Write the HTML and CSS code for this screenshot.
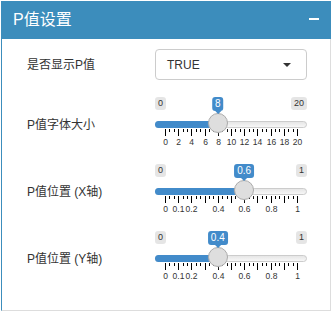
FILE: index.html
```html
<!DOCTYPE html>
<html lang="zh">
<head>
<meta charset="utf-8">
<title>P值设置</title>
<link rel="stylesheet" href="styles.css">
</head>
<body>
<div class="box">
  <div class="box-header">
    <h3 class="box-title">P值设置</h3>
    <span class="collapse-btn" aria-label="collapse"></span>
  </div>
  <div class="box-body">
    <div class="form-row select-row">
      <label class="control-label">是否显示P值</label>
      <div class="select">
        <span class="select-value">TRUE</span>
        <span class="caret"></span>
      </div>
    </div>
    <div class="form-row slider-row">
      <label class="control-label">P值字体大小</label>
      <div class="irs" data-min="0" data-max="20" data-value="8" data-labels="0,2,4,6,8,10,12,14,16,18,20">
        <span class="irs-line"></span>
        <span class="irs-bar"></span>
        <span class="irs-min">0</span>
        <span class="irs-max">20</span>
        <span class="irs-grid"></span>
        <span class="irs-handle"></span>
        <span class="irs-single">8</span>
      </div>
    </div>
    <div class="form-row slider-row">
      <label class="control-label">P值位置 (X轴)</label>
      <div class="irs" data-min="0" data-max="1" data-value="0.6" data-labels="0,0.1,0.2,0.4,0.6,0.8,1">
        <span class="irs-line"></span>
        <span class="irs-bar"></span>
        <span class="irs-min">0</span>
        <span class="irs-max">1</span>
        <span class="irs-grid"></span>
        <span class="irs-handle"></span>
        <span class="irs-single">0.6</span>
      </div>
    </div>
    <div class="form-row slider-row">
      <label class="control-label">P值位置 (Y轴)</label>
      <div class="irs" data-min="0" data-max="1" data-value="0.4" data-labels="0,0.1,0.2,0.4,0.6,0.8,1">
        <span class="irs-line"></span>
        <span class="irs-bar"></span>
        <span class="irs-min">0</span>
        <span class="irs-max">1</span>
        <span class="irs-grid"></span>
        <span class="irs-handle"></span>
        <span class="irs-single">0.4</span>
      </div>
    </div>
  </div>
</div>
<script src="script.js"></script>
</body>
</html>
```
FILE: styles.css
```css
* { box-sizing: border-box; }
html, body { margin: 0; padding: 0; background: #fff; }
body {
  padding: 1px 0 0 1px;
  font-family: "Liberation Sans", "Noto Sans CJK SC", sans-serif;
  color: #333;
  overflow: hidden;
}
.box {
  width: 330px;
  height: 310px;
  display: flex;
  flex-direction: column;
}
.box-header {
  height: 38px;
  flex: none;
  background: #3c8dbc;
  display: flex;
  align-items: center;
  justify-content: space-between;
  padding: 0 12px 0 12px;
}
.box-title {
  margin: 0;
  font-size: 16px;
  font-weight: normal;
  color: #fff;
  line-height: 20px;
}
.collapse-btn {
  width: 10px;
  height: 2px;
  background: #fff;
  margin-right: 0;
  margin-top: -3px;
}
.box-body {
  flex: 1;
  border-left: 1px solid #3c8dbc;
  border-right: 1px solid #ddd;
  border-bottom: 1px solid #ddd;
  padding: 10px 0 0 25px;
}
.form-row {
  display: grid;
  grid-template-columns: 128px 152px;
}
.control-label {
  font-size: 12px;
  line-height: 16px;
  color: #333;
  font-weight: normal;
}
.select-row {
  height: 31px;
  margin-bottom: 17px;
}
.select-row .control-label { align-self: center; }
.select {
  height: 31px;
  border: 1px solid #ccc;
  border-radius: 4px;
  display: flex;
  align-items: center;
  justify-content: space-between;
  padding: 0 15px 0 11px;
  background: #fff;
}
.select-value { font-size: 12px; color: #333; }
.caret {
  width: 0;
  height: 0;
  border-left: 4px solid transparent;
  border-right: 4px solid transparent;
  border-top: 4px solid #333;
}
.slider-row {
  height: 60px;
  margin-bottom: 7px;
}
.slider-row .control-label { margin-top: 20px; }

.irs {
  position: relative;
  width: 152px;
  height: 60px;
  display: block;
}
.irs > span { position: absolute; display: block; }
.irs-line {
  top: 24px;
  left: 0;
  width: 100%;
  height: 7px;
  border: 1px solid #ccc;
  border-radius: 7px;
  background: linear-gradient(to bottom, #dedede -50%, #fff 150%);
  background-color: #ededed;
}
.irs-bar {
  top: 24px;
  left: 0;
  height: 7px;
  background: #428bca;
  border-radius: 7px 0 0 7px;
}
.irs-min, .irs-max {
  top: 0;
  padding: 1px 3px;
  font-size: 9px;
  line-height: 11px;
  background: rgba(0,0,0,0.1);
  border-radius: 3px;
  color: #333;
}
.irs-min { left: 0; }
.irs-max { right: 0; }
.irs-single {
  top: 0;
  padding: 1px 3px;
  font-size: 10px;
  line-height: 12px;
  background: #428bca;
  color: #fff;
  border-radius: 3px;
  transform: translateX(-50%);
  white-space: nowrap;
}
.irs-single::before {
  content: "";
  position: absolute;
  left: 50%;
  bottom: -6px;
  margin-left: -3px;
  border: 3px solid transparent;
  border-top-color: #428bca;
}
.irs-handle {
  top: 16px;
  width: 20px;
  height: 20px;
  border: 1px solid #ababab;
  background: #dedede;
  border-radius: 50%;
  box-shadow: 1px 1px 3px rgba(255,255,255,0.3);
}
.irs-grid {
  top: 32px;
  left: 0;
  width: 100%;
  height: 20px;
}
.irs-grid-pol {
  position: absolute;
  top: 0;
  width: 1px;
  height: 7px;
  background: #000;
}
.irs-grid-pol.small { height: 3px; }
.irs-grid-text {
  position: absolute;
  top: 9px;
  font-size: 8.5px;
  line-height: 9px;
  color: #333;
  transform: translateX(-50%);
  white-space: nowrap;
}
```
FILE: script.js
```js
(function () {
  function fmt(v) { return String(+v.toFixed(4)); }
  var sliders = document.querySelectorAll('.irs');
  Array.prototype.forEach.call(sliders, function (irs) {
    var min = +irs.dataset.min, max = +irs.dataset.max, value = +irs.dataset.value;
    var labels = irs.dataset.labels.split(',').map(Number);
    var W = irs.clientWidth, H = 20, span = W - H;
    function px(v) { return H / 2 + (v - min) / (max - min) * span; }
    var grid = irs.querySelector('.irs-grid');
    function pol(cls, left) {
      var s = document.createElement('span');
      s.className = cls;
      s.style.left = Math.round(left) + 'px';
      grid.appendChild(s);
    }
    var n = 10;
    for (var i = 0; i <= n; i++) {
      pol('irs-grid-pol', H / 2 + i / n * span);
      if (i > 0) {
        for (var k = 1; k <= 2; k++) {
          pol('irs-grid-pol small', H / 2 + (i - k / 3) / n * span);
        }
      }
    }
    labels.forEach(function (v) {
      var t = document.createElement('span');
      t.className = 'irs-grid-text';
      t.textContent = fmt(v);
      t.style.left = (Math.round(px(v)) + 0.5) + 'px';
      grid.appendChild(t);
    });
    var c = px(value);
    irs.querySelector('.irs-bar').style.width = c + 'px';
    irs.querySelector('.irs-handle').style.left = (c - H / 2) + 'px';
    irs.querySelector('.irs-single').style.left = c + 'px';
  });
})();
```
